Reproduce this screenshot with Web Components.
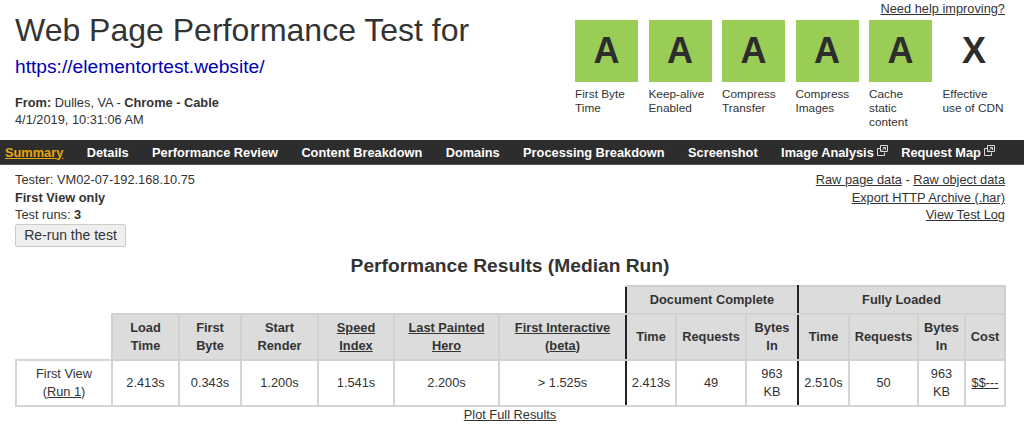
<!DOCTYPE html>
<html>
<head>
<meta charset="utf-8">
<title>Web Page Performance Test</title>
<style>
    html, body { margin: 0; background: #fff; }
    body { font-family: "Liberation Sans", Arial, sans-serif; color: #333; font-size: 12.8px; }
</style>
</head>
<body>
<wpt-header>
    <wpt-grade label="First Byte Time">A</wpt-grade>
    <wpt-grade label="Keep-alive Enabled">A</wpt-grade>
    <wpt-grade label="Compress Transfer">A</wpt-grade>
    <wpt-grade label="Compress Images">A</wpt-grade>
    <wpt-grade label="Cache static content">A</wpt-grade>
    <wpt-grade label="Effective use of CDN" empty>X</wpt-grade>
</wpt-header>
<wpt-nav>
    <wpt-nav-item active>Summary</wpt-nav-item>
    <wpt-nav-item>Details</wpt-nav-item>
    <wpt-nav-item>Performance Review</wpt-nav-item>
    <wpt-nav-item>Content Breakdown</wpt-nav-item>
    <wpt-nav-item>Domains</wpt-nav-item>
    <wpt-nav-item>Processing Breakdown</wpt-nav-item>
    <wpt-nav-item>Screenshot</wpt-nav-item>
    <wpt-nav-item external>Image Analysis</wpt-nav-item>
    <wpt-nav-item external>Request Map</wpt-nav-item>
</wpt-nav>
<wpt-info></wpt-info>
<wpt-results></wpt-results>

<script>
customElements.define('wpt-header', class extends HTMLElement {
    constructor() {
        super();
        const shadowRoot = this.attachShadow({mode: 'open'});
        shadowRoot.innerHTML = `
        <style>
            :host{
                display: flex;
                justify-content: space-between;
                height: 140px;
                padding: 0 19px 0 15px;
                box-sizing: border-box;
            }
            h1{
                margin: 12px 0 0;
                font-size: 32px;
                line-height: 37px;
                font-weight: normal;
            }
            .url{
                display: block;
                margin-top: 7px;
                font-size: 19.2px;
                line-height: 22px;
                color: #0000b4;
                text-decoration: none;
            }
            .from{
                margin-top: 16px;
                line-height: 17px;
            }
            .right{
                width: 430px;
            }
            .help{
                height: 20px;
                line-height: 18px;
                text-align: right;
            }
            a{ color: inherit; }
            .grades{
                display: grid;
                grid-template-columns: repeat(6, 63px);
                column-gap: 10.5px;
            }
        </style>
        <div>
            <h1>Web Page Performance Test for</h1>
            <a class="url">https://elementortest.website/</a>
            <div class="from"><b>From:</b> Dulles, VA - <b>Chrome - Cable</b><br>4/1/2019, 10:31:06 AM</div>
        </div>
        <div class="right">
            <div class="help"><a href="#">Need help improving?</a></div>
            <div class="grades"><slot></slot></div>
        </div>
        `;
    }
});

customElements.define('wpt-grade', class extends HTMLElement {
    constructor() {
        super();
        const shadowRoot = this.attachShadow({mode: 'open'});
        shadowRoot.innerHTML = `
        <style>
            :host{
                display: block;
                font-size: 11.8px;
            }
            .box{
                height: 62px;
                background: #9acd56;
                display: flex;
                align-items: center;
                justify-content: center;
                font-size: 36px;
                font-weight: bold;
                color: #2d2d2d;
            }
            :host([empty]) .box{
                background: none;
            }
            .label{
                margin-top: 5px;
                line-height: 14px;
            }
        </style>
        <div class="box"><slot></slot></div>
        <div class="label"></div>
        `;
        shadowRoot.querySelector('.label').textContent = this.getAttribute('label');
    }
});

customElements.define('wpt-nav', class extends HTMLElement {
    constructor() {
        super();
        const shadowRoot = this.attachShadow({mode: 'open'});
        shadowRoot.innerHTML = `
        <style>
            :host{
                display: flex;
                gap: 23.4px;
                height: 25px;
                padding: 0 5px;
                align-items: center;
                background: #2d2d2d;
                border-bottom: 1px solid #555;
                box-sizing: border-box;
            }
        </style>
        <slot></slot>
        `;
    }
});

customElements.define('wpt-nav-item', class extends HTMLElement {
    constructor() {
        super();
        const shadowRoot = this.attachShadow({mode: 'open'});
        const external = this.hasAttribute('external');
        shadowRoot.innerHTML = `
        <style>
            :host{
                display: inline-flex;
                align-items: flex-start;
                font-size: 12.8px;
                font-weight: bold;
                color: #fff;
                white-space: nowrap;
            }
            :host([active]){
                color: #e8a80c;
                text-decoration: underline;
            }
            :host([external]){
                margin-right: -10px;
            }
            svg{ margin: 0 0 0 3px; }
        </style>
        <slot></slot>
        ${external ? `<svg width="11" height="11" viewBox="0 0 11 11" fill="none" stroke="#ddd" stroke-width="1">
            <path d="M3.5 3.5H.5v7h7V7.5"/><path d="M3.5 .5h7v6h-7z"/><path d="M5 5.5l3-3M6 2.5h2.5V5"/>
        </svg>` : ''}
        `;
    }
});

customElements.define('wpt-info', class extends HTMLElement {
    constructor() {
        super();
        const shadowRoot = this.attachShadow({mode: 'open'});
        shadowRoot.innerHTML = `
        <style>
            :host{
                display: flex;
                justify-content: space-between;
                padding: 6px 19px 0 15px;
                line-height: 17.6px;
            }
            .links{ text-align: right; }
            a{ color: inherit; }
            button{
                display: block;
                width: 111px;
                height: 23px;
                padding: 0;
                font: 14px "Liberation Sans", Arial, sans-serif;
                color: #333;
                background: #efefef;
                border: 1px solid #ccc;
                border-radius: 2px;
            }
        </style>
        <div>
            <div>Tester: VM02-07-192.168.10.75</div>
            <div><b>First View only</b></div>
            <div>Test runs: <b>3</b></div>
            <button>Re-run the test</button>
        </div>
        <div class="links">
            <div><a href="#">Raw page data</a> - <a href="#">Raw object data</a></div>
            <div><a href="#">Export HTTP Archive (.har)</a></div>
            <div><a href="#">View Test Log</a></div>
        </div>
        `;
    }
});

customElements.define('wpt-results', class extends HTMLElement {
    constructor() {
        super();
        const shadowRoot = this.attachShadow({mode: 'open'});
        const widths = [96, 67, 62, 77, 76, 105, 127, 50, 70, 52, 51, 69, 47, 40];
        shadowRoot.innerHTML = `
        <style>
            :host{
                display: block;
                padding: 0 19px 0 15px;
                text-align: center;
            }
            h2{
                margin: 8px 0 0;
                height: 30px;
                font-size: 19.2px;
                line-height: 22px;
            }
            table{
                table-layout: fixed;
                box-sizing: border-box;
                width: 989px;
                border-collapse: collapse;
                line-height: 17.5px;
            }
            th, td{
                padding: 0;
                border: 2px solid #d5d5d5;
                text-align: center;
            }
            th{
                background: #dcdcdc;
                border-color: #d0d0d0;
            }
            a{ color: inherit; }
            .blank{
                background: none;
                border: 0;
            }
            .sep{
                border-left: 2px solid #222;
            }
            .pre{
                border-right: 2px solid #222;
            }
            .group th{ height: 26px; }
            .head th{ height: 44px; }
            .row td{ height: 44px; }
            .plot{ line-height: 18px; margin-top: -1px; }
        </style>
        <h2>Performance Results (Median Run)</h2>
        <table>
            <colgroup>${widths.map(w => `<col style="width:${w}px">`).join('')}</colgroup>
            <tr class="group">
                <th class="blank" colspan="7"></th>
                <th class="sep pre" colspan="3">Document Complete</th>
                <th colspan="4">Fully Loaded</th>
            </tr>
            <tr class="head">
                <th class="blank"></th>
                <th>Load<br>Time</th>
                <th>First<br>Byte</th>
                <th>Start<br>Render</th>
                <th><a href="#">Speed<br>Index</a></th>
                <th><a href="#">Last Painted<br>Hero</a></th>
                <th class="pre"><a href="#">First Interactive</a><br>(<a href="#">beta</a>)</th>
                <th>Time</th>
                <th>Requests</th>
                <th class="pre">Bytes<br>In</th>
                <th>Time</th>
                <th>Requests</th>
                <th>Bytes<br>In</th>
                <th>Cost</th>
            </tr>
            <tr class="row">
                <td>First View<br>(<a href="#">Run 1</a>)</td>
                <td>2.413s</td>
                <td>0.343s</td>
                <td>1.200s</td>
                <td>1.541s</td>
                <td>2.200s</td>
                <td class="pre">&gt; 1.525s</td>
                <td>2.413s</td>
                <td>49</td>
                <td class="pre">963<br>KB</td>
                <td>2.510s</td>
                <td>50</td>
                <td>963<br>KB</td>
                <td><a href="#">$$---</a></td>
            </tr>
        </table>
        <div class="plot"><a href="#">Plot Full Results</a></div>
        `;
    }
});
</script>
</body>
</html>
